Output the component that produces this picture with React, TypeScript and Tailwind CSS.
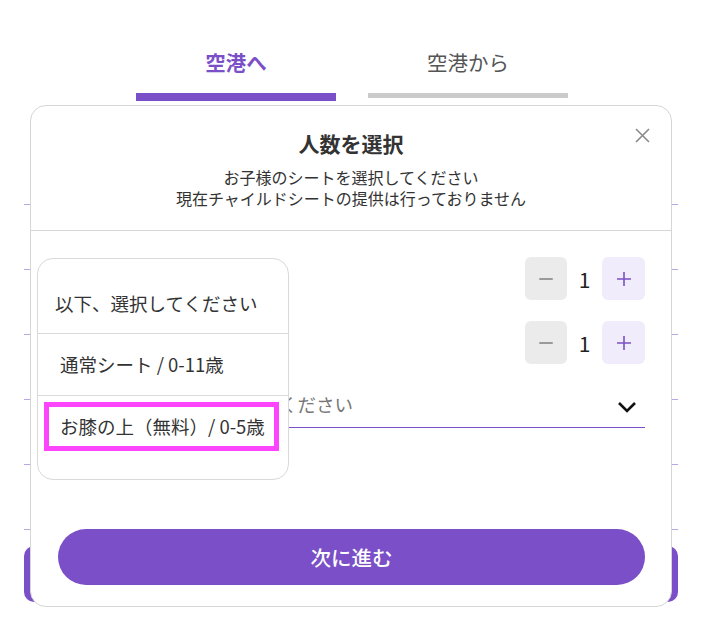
import React from "react";

const FONT = { fontFamily: '"Noto Sans CJK JP", "Noto Sans", sans-serif' };

function Stepper() {
  return (
    <div className="flex items-center">
      <div className="w-[42px] h-[43px] rounded-[6px] bg-[#ebebeb] flex items-center justify-center">
        <div className="w-[14px] h-[2px] bg-[#9a9a9a] rounded-full" />
      </div>
      <div className="w-[35px] text-center text-[21px] leading-[28px] text-[#222]">1</div>
      <div className="w-[43px] h-[43px] rounded-[6px] bg-[#f0ecfb] flex items-center justify-center">
        <svg width="16" height="16" viewBox="0 0 16 16">
          <path d="M8 1v14M1 8h14" stroke="#7a4fc7" strokeWidth="1.6" fill="none" />
        </svg>
      </div>
    </div>
  );
}

export default function App() {
  return (
    <div className="relative w-[704px] h-[630px] bg-white overflow-hidden" style={FONT}>
      {/* background page */}
      <div className="flex flex-col">
        <div className="flex justify-center items-start gap-[32px]">
          <div className="w-[200px] flex flex-col items-center">
            <div className="pt-[48px] h-[76px] text-[20.5px] leading-[28px] font-bold text-[#7a4fc7]">空港へ</div>
            <div className="mt-[17px] w-full h-[8px] bg-[#7a4fc7]" />
          </div>
          <div className="w-[200px] flex flex-col items-center">
            <div className="pt-[48px] h-[76px] text-[20.5px] leading-[28px] text-[#555]">空港から</div>
            <div className="mt-[17px] w-full h-[5px] bg-[#cbcbcb]" />
          </div>
        </div>
        <div className="mt-[39px] ml-[24px] w-[654px] flex flex-col">
          <div className="h-[65px] border-b border-[#b9a6e3]" />
          <div className="h-[65px] border-b border-[#b9a6e3]" />
          <div className="h-[65px] border-b border-[#b9a6e3]" />
          <div className="h-[65px] border-b border-[#b9a6e3]" />
          <div className="h-[65px] border-b border-[#b9a6e3]" />
          <div className="h-[65px] border-b border-[#b9a6e3]" />
        </div>
        <div className="mt-[16px] ml-[24px] w-[654px] h-[56px] rounded-[10px] bg-[#7a4fc7]" />
      </div>

      {/* modal */}
      <div className="absolute left-[30px] top-[105px] w-[642px] h-[502px] rounded-[16px] border border-[#d6d6d6] bg-white flex flex-col">
        <button className="absolute left-[604px] top-[22px] w-[15px] h-[15px]">
          <svg width="15" height="15" viewBox="0 0 15 15">
            <path d="M1 1l13 13M14 1L1 14" stroke="#8a8a8a" strokeWidth="1.6" fill="none" />
          </svg>
        </button>
        <div className="pt-[23px] pb-[21px] border-b border-[#d6d6d6] flex flex-col items-center text-[#333]">
          <div className="text-[21px] leading-[28px] font-bold">人数を選択</div>
          <div className="mt-[10px] text-[16px] leading-[21px] text-center">
            <div>お子様のシートを選択してください</div>
            <div>現在チャイルドシートの提供は行っておりません</div>
          </div>
        </div>
        <div className="flex-1 flex flex-col pl-[27px] pr-[26px] pt-[26px] pb-[21px]">
          <div className="flex items-center justify-end h-[43px]">
            <Stepper />
          </div>
          <div className="mt-[21px] flex items-center justify-end h-[43px]">
            <Stepper />
          </div>
          <div className="mt-[19px] h-[45px] border-b border-[#7a4fc7] flex items-center justify-between">
            <div className="text-[18.5px] text-[#777]">お子様のシートを選択してください</div>
            <svg width="20" height="12" viewBox="0 0 20 12" className="mr-[8px] mt-[4px]">
              <path d="M2 2l8 8 8-8" stroke="#111" strokeWidth="2.6" fill="none" />
            </svg>
          </div>
          <div className="mt-auto h-[56px] rounded-full bg-[#7a4fc7] flex items-center justify-center text-white text-[20.5px] font-medium">
            次に進む
          </div>
        </div>
      </div>

      {/* dropdown menu */}
      <div className="absolute left-[37px] top-[258px] w-[252px] h-[222px] rounded-[16px] border border-[#d9d9d9] bg-white flex flex-col text-[#333]">
        <div className="h-[75px] border-b border-[#d9d9d9] pt-[32px] pl-[17px] text-[18.5px] leading-[24px]">
          以下、選択してください
        </div>
        <div className="h-[62px] border-b border-[#d9d9d9] flex items-center pl-[22px] text-[18.5px]">
          通常シート / 0-11歳
        </div>
        <div className="mt-[6px] ml-[6px] w-[235px] h-[49px] border-[5px] border-[#fc45fc] flex items-center pl-[11px] text-[18.5px]">
          お膝の上（無料）/ 0-5歳
        </div>
      </div>
    </div>
  );
}
